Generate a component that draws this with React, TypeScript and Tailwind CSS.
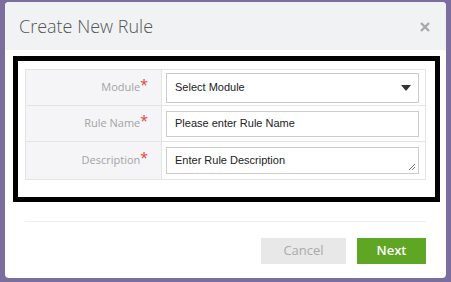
const rows = [
    { label: 'Module', kind: 'select', value: 'Select Module' },
    { label: 'Rule Name', kind: 'input', value: 'Please enter Rule Name' },
    { label: 'Description', kind: 'textarea', value: 'Enter Rule Description' },
];

export default function App() {
    return (
        <div className="w-[451px] h-[282px] bg-[#7b6e9f] overflow-hidden pl-[5px] pt-[2px] font-['Open_Sans',sans-serif]">
            <div className="w-[441px] h-[276px] bg-white rounded-[4px] overflow-hidden flex flex-col">
                {/* Header */}
                <div className="h-[48px] bg-[#f1f2f4] flex items-center justify-between pl-[14px] pr-[16px] shrink-0">
                    <h1 className="text-[18px] font-light text-[#555] mt-[1px]">Create New Rule</h1>
                    <svg width="10" height="10" viewBox="0 0 10 10" className="mt-[2px]">
                        <path d="M1 1L9 9M9 1L1 9" stroke="#a8a8a8" strokeWidth="2.4" />
                    </svg>
                </div>

                {/* Body */}
                <div className="ml-[8px] mt-[6px] w-[427px] h-[146px] border-[5px] border-black pt-[8px] pl-[7px]">
                    <div className="w-[401px] border border-[#e4e4e4]">
                        {rows.map((row, i) => (
                            <div
                                key={row.label}
                                className={`flex ${i < rows.length - 1 ? 'border-b border-[#e4e4e4]' : ''} ${i === 2 ? 'h-[37px]' : 'h-[36px]'}`}
                            >
                                <div className="w-[136px] bg-[#f5f5f7] border-r border-[#e4e4e4] flex items-center justify-end pr-[13px] text-[11px] text-[#a3a3a3]">
                                    <span>{row.label}</span>
                                    <span className="text-[#e8403a] text-[14px] leading-none -mt-[5px]">*</span>
                                </div>
                                <div className="flex-1 flex items-center pl-[4px] pr-[6px]">
                                    {row.kind === 'select' && (
                                        <div className="w-full h-[30px] border border-[#ccc] flex items-center justify-between pl-[8px] pr-[6px] font-['Liberation_Sans',Arial,sans-serif] text-[11px] text-[#222]">
                                            <span>{row.value}</span>
                                            <svg width="10" height="6" viewBox="0 0 10 6" className="mr-[1px]">
                                                <path d="M0 0h10L5 6z" fill="#333" />
                                            </svg>
                                        </div>
                                    )}
                                    {row.kind === 'input' && (
                                        <div className="w-full h-[26px] border border-[#ccc] flex items-center pl-[8px] font-['Liberation_Sans',Arial,sans-serif] text-[11px] text-[#222]">
                                            {row.value}
                                        </div>
                                    )}
                                    {row.kind === 'textarea' && (
                                        <div className="relative w-full h-[27px] border border-[#ccc] flex items-center pl-[8px] font-['Liberation_Sans',Arial,sans-serif] text-[11px] text-[#222]">
                                            {row.value}
                                            <svg width="8" height="8" viewBox="0 0 8 8" className="absolute right-[2px] bottom-[2px]">
                                                <path d="M7 1L1 7M7 4L4 7" stroke="#777" strokeWidth="1" />
                                            </svg>
                                        </div>
                                    )}
                                </div>
                            </div>
                        ))}
                    </div>
                </div>

                {/* Footer */}
                <div className="mx-[20px] mt-[19px] border-t border-[#eee]" />
                <div className="flex justify-end gap-[11px] pr-[20px] pt-[16px]">
                    <button className="w-[85px] h-[26px] bg-[#e8e8e8] text-[#aaa] text-[13px]">Cancel</button>
                    <button className="w-[69px] h-[26px] bg-[#5fa625] text-white text-[13px] font-semibold">Next</button>
                </div>
            </div>
        </div>
    );
}
